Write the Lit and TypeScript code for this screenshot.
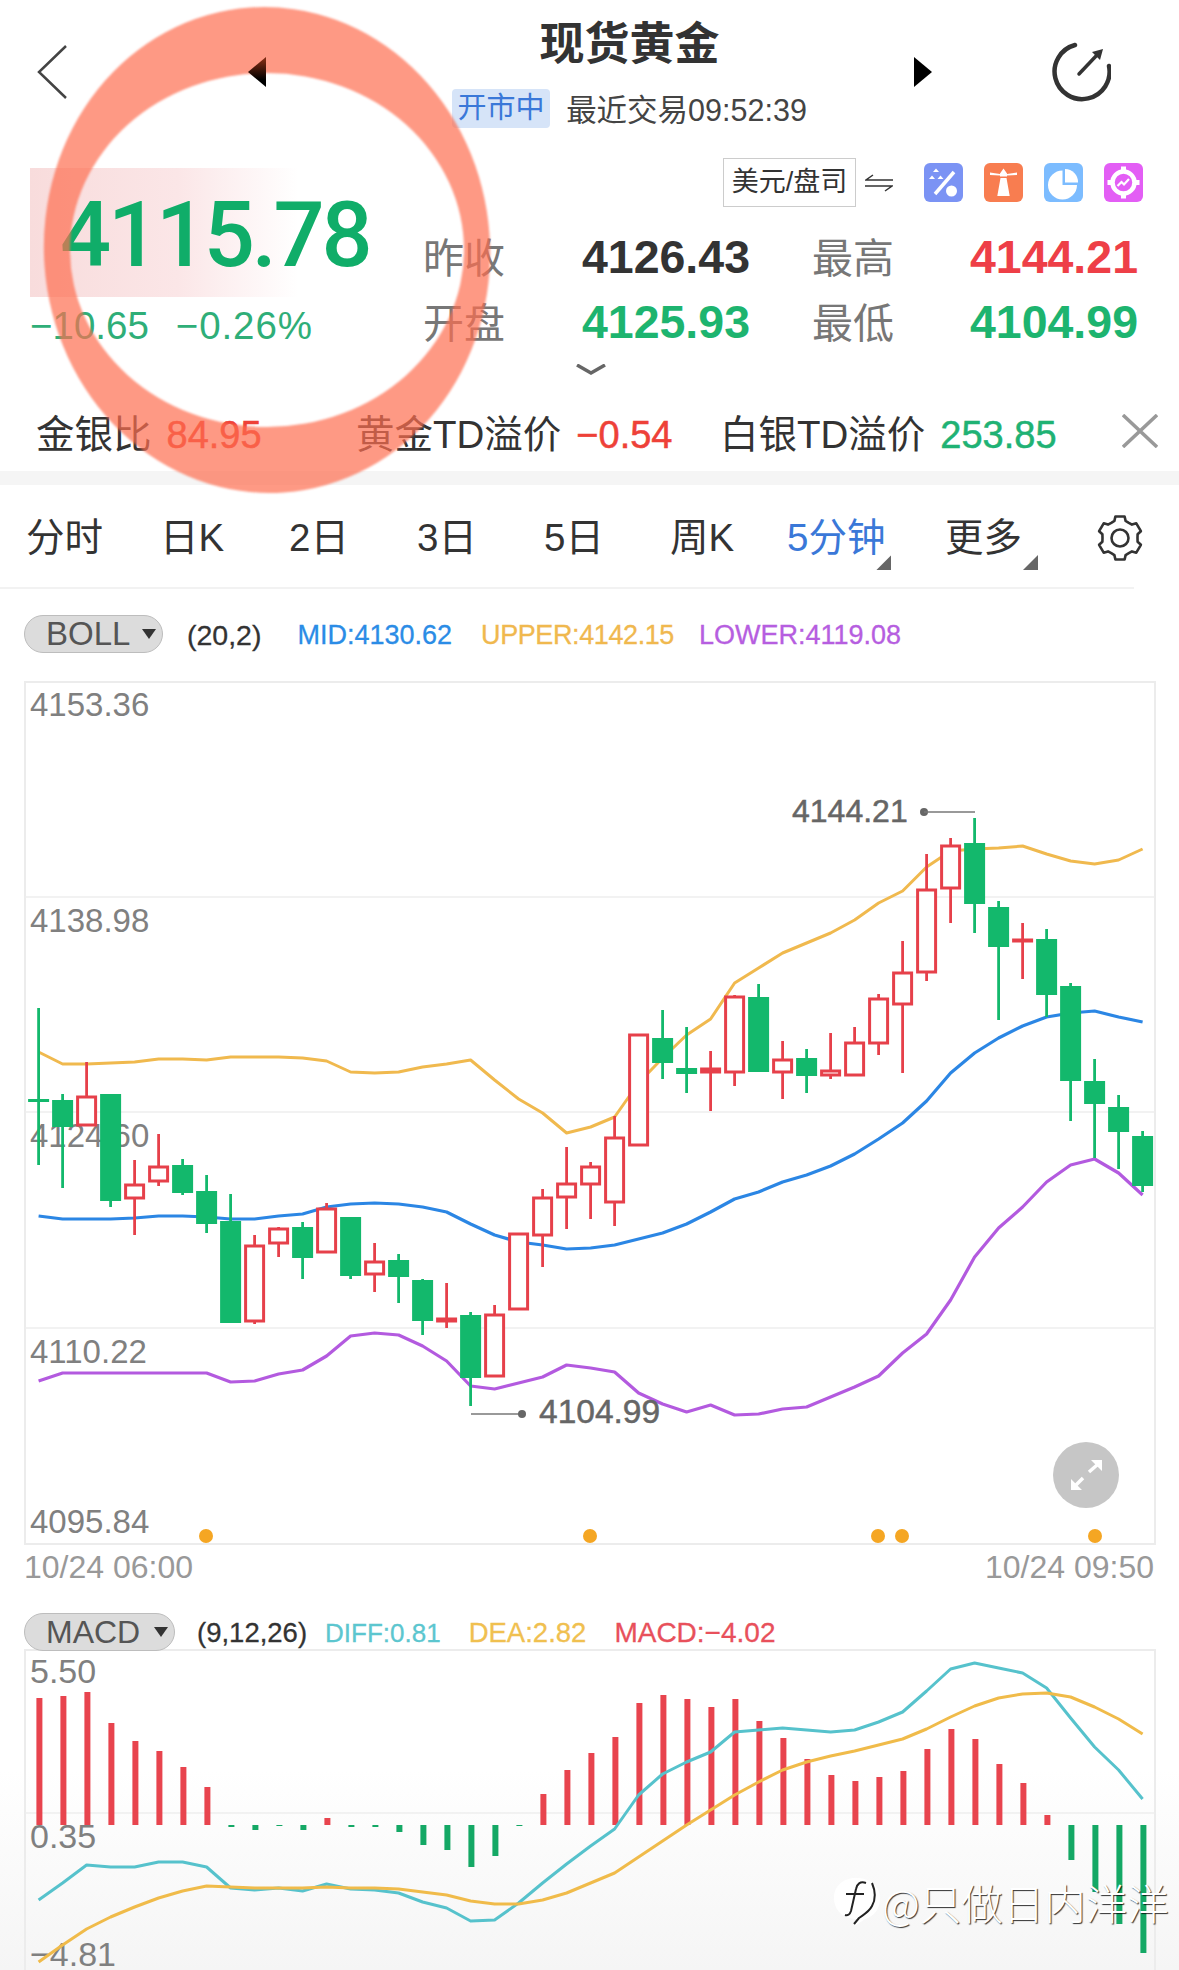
import { LitElement, html, svg, css } from 'lit'
import { customElement } from 'lit/decorators.js'

// wickTop, bodyTop, bodyBottom, wickBottom, 1 = rising (hollow red)
const CANDLES: number[][] = [
  [1008, 1099, 1102, 1165, 0], [1094, 1100, 1127, 1188, 0], [1062, 1096, 1126, 1126, 1], [1094, 1094, 1201, 1207, 0],
  [1160, 1184, 1199, 1235, 1], [1134, 1166, 1182, 1186, 1], [1159, 1165, 1193, 1195, 0], [1175, 1191, 1224, 1233, 0],
  [1194, 1221, 1323, 1323, 0], [1235, 1245, 1322, 1324, 1], [1227, 1228, 1244, 1257, 1], [1222, 1227, 1258, 1279, 0],
  [1203, 1208, 1253, 1253, 1], [1217, 1217, 1276, 1279, 0], [1243, 1261, 1275, 1292, 1], [1254, 1260, 1277, 1303, 0],
  [1279, 1280, 1321, 1335, 0], [1283, 1318, 1322, 1328, 1], [1312, 1315, 1378, 1406, 0], [1305, 1314, 1377, 1377, 1],
  [1233, 1233, 1310, 1310, 1], [1189, 1197, 1236, 1267, 1], [1147, 1183, 1198, 1229, 1], [1162, 1166, 1185, 1219, 1],
  [1116, 1137, 1203, 1226, 1], [1034, 1034, 1146, 1146, 1], [1010, 1038, 1063, 1079, 0], [1027, 1068, 1074, 1093, 0],
  [1051, 1068, 1073, 1111, 1], [995, 996, 1073, 1086, 1], [984, 997, 1072, 1072, 0], [1041, 1059, 1073, 1099, 1],
  [1049, 1058, 1076, 1093, 0], [1033, 1070, 1076, 1079, 1], [1027, 1042, 1076, 1076, 1], [994, 998, 1044, 1055, 1],
  [941, 972, 1005, 1073, 1], [854, 889, 973, 981, 1], [838, 845, 889, 923, 1], [818, 843, 904, 933, 0],
  [901, 907, 947, 1020, 0], [923, 939, 942, 979, 1], [929, 939, 995, 1017, 0], [983, 986, 1081, 1121, 0],
  [1059, 1081, 1104, 1158, 0], [1095, 1107, 1132, 1169, 0], [1131, 1136, 1186, 1192, 0],
]

const UPPER = [1052, 1064, 1064, 1063, 1062, 1059, 1059, 1060, 1057, 1057, 1057, 1058, 1061, 1072, 1073, 1072, 1067, 1064, 1060, 1080, 1099, 1113, 1133, 1127, 1117, 1083, 1058, 1035, 1019, 983, 968, 953, 943, 933, 920, 903, 891, 867, 851, 849, 848, 846, 854, 861, 864, 860, 849]
const MID = [1216, 1219, 1219, 1219, 1218, 1216, 1216, 1217, 1219, 1219, 1216, 1214, 1207, 1204, 1203, 1204, 1207, 1212, 1224, 1235, 1242, 1245, 1249, 1248, 1245, 1239, 1233, 1224, 1212, 1199, 1192, 1182, 1175, 1166, 1154, 1139, 1123, 1101, 1073, 1053, 1038, 1026, 1017, 1013, 1011, 1017, 1022]
const LOWER = [1381, 1373, 1373, 1373, 1373, 1373, 1373, 1373, 1382, 1381, 1374, 1370, 1356, 1336, 1333, 1335, 1346, 1361, 1386, 1389, 1383, 1377, 1365, 1368, 1372, 1393, 1404, 1412, 1405, 1415, 1414, 1409, 1407, 1397, 1387, 1376, 1353, 1334, 1300, 1257, 1228, 1207, 1182, 1165, 1159, 1173, 1195]

// bar end y against the zero line at 1825
const BARS = [1698, 1696, 1692, 1723, 1741, 1751, 1767, 1787, 1827, 1830, 1826, 1830, 1818, 1827, 1827, 1832, 1845, 1850, 1867, 1856, 1826, 1794, 1770, 1753, 1737, 1703, 1695, 1699, 1707, 1699, 1721, 1738, 1759, 1775, 1781, 1777, 1771, 1749, 1729, 1739, 1764, 1783, 1815, 1860, 1892, 1924, 1953]
const DIFF = [1900, 1883, 1865, 1867, 1867, 1862, 1862, 1867, 1888, 1890, 1888, 1891, 1884, 1889, 1890, 1893, 1902, 1908, 1921, 1920, 1903, 1883, 1864, 1846, 1829, 1795, 1774, 1762, 1752, 1732, 1730, 1728, 1730, 1732, 1730, 1722, 1712, 1691, 1669, 1663, 1668, 1673, 1688, 1718, 1747, 1770, 1799]
const DEA = [1962, 1945, 1929, 1917, 1907, 1898, 1891, 1886, 1887, 1888, 1888, 1888, 1887, 1888, 1888, 1889, 1892, 1895, 1901, 1904, 1904, 1900, 1893, 1883, 1873, 1857, 1841, 1825, 1810, 1795, 1782, 1770, 1762, 1756, 1751, 1745, 1739, 1729, 1717, 1706, 1698, 1694, 1693, 1697, 1707, 1719, 1734]

const xAt = (i: number) => 38.6 + 24 * i
const line = (ys: number[]) => ys.map((y, i) => `${xAt(i).toFixed(1)},${y}`).join(' ')

// ellipse as two arcs, so both rims fit in one evenodd path
function ellipse(cx: number, cy: number, rx: number, ry: number, deg: number) {
  const a = (deg * Math.PI) / 180
  const dx = rx * Math.cos(a), dy = rx * Math.sin(a)
  const s = `${(cx + dx).toFixed(1)} ${(cy + dy).toFixed(1)}`
  const e = `${(cx - dx).toFixed(1)} ${(cy - dy).toFixed(1)}`
  return `M${s}A${rx} ${ry} ${deg} 1 0 ${e}A${rx} ${ry} ${deg} 1 0 ${s}Z`
}

function gearPath(cx: number, cy: number) {
  const pt = (r: number, deg: number) => {
    const a = (deg * Math.PI) / 180
    return `${(cx + r * Math.cos(a)).toFixed(1)} ${(cy + r * Math.sin(a)).toFixed(1)}`
  }
  let d = ''
  for (let k = 0; k < 6; k++) {
    const a = k * 60 - 90
    d += `${k ? 'L' : 'M'}${pt(17.5, a - 30)}L${pt(18, a - 18)}L${pt(22, a - 12)}L${pt(22, a + 12)}L${pt(18, a + 18)}`
  }
  return d + 'Z'
}

const TABS = ['分时', '日K', '2日', '3日', '5日', '周K', '5分钟', '更多']

@customElement('app-root')
export class AppRoot extends LitElement {
  static styles = css`
    :host {
      display: block;
      position: relative;
      width: 1179px;
      height: 1970px;
      overflow: hidden;
      background: linear-gradient(#fff 0, #fff 1770px, #f5f5f5 1970px);
      font-family: "Liberation Sans", "Noto Sans CJK SC", sans-serif;
      color: #333;
    }
    svg { display: block; }

    .header { display: grid; grid-template-columns: 452px 355px 1fr; height: 158px; }
    .head-left { display: flex; align-items: flex-start; padding: 45px 0 0 37px; }
    .tri-left { margin: 12px 0 0 181px; position: relative; z-index: 6; }
    .head-mid { display: flex; flex-direction: column; align-items: center; padding-top: 20px; }
    .title { font-size: 45px; line-height: 50px; font-weight: 700; color: #333; white-space: nowrap; }
    .status { display: flex; align-items: center; margin-top: 16px; white-space: nowrap; font-size: 30.5px; color: #444; }
    .badge { width: 98px; height: 39px; line-height: 38px; text-align: center; font-size: 29px; color: #3a78d8; background: #d6e4f8; border-radius: 4px; margin-right: 16px; }
    .head-right { display: flex; align-items: flex-start; padding: 42px 0 0 107px; }
    .tri-right { margin-top: 15px; }
    .share { margin-left: 119px; }

    .quote { display: grid; grid-template-columns: 395px 1fr; padding-left: 30px; padding-right: 36px; }
    .price-box { margin-top: 10px; width: 268px; height: 129px; box-sizing: border-box; padding: 7px 0 0 30px; display: flex; align-items: center; background: linear-gradient(90deg, #f8dcdc, #fbe6e7 55%, #fff); }
    .price { font-family: Roboto, "Liberation Sans", sans-serif; font-weight: 500; font-size: 90px; letter-spacing: -3.2px; line-height: 1; color: #10ad69; white-space: nowrap; }
    .change { display: flex; gap: 27px; margin-top: 7px; font-size: 38.5px; line-height: 44px; color: #2fae78; white-space: nowrap; }
    .change .pct { letter-spacing: .9px; }

    .tools { display: flex; justify-content: flex-end; align-items: center; height: 49px; }
    .currency { width: 133px; height: 49px; box-sizing: border-box; border: 1.5px solid #ccc; font-size: 27px; line-height: 46px; text-align: center; color: #333; white-space: nowrap; }
    .swap { margin-left: 9px; margin-right: 31px; }
    .tiles { display: flex; gap: 21px; }

    .stats { display: grid; grid-template-columns: 80px 247px 144px 244px; grid-auto-rows: 65px; align-items: center; margin: 17px 0 0 -2px; white-space: nowrap; }
    .lab { font-size: 41px; color: #777; margin-top: -4px; }
    .lab.far { text-align: right; }
    .val { font-size: 46.5px; font-weight: 700; text-align: right; }
    .dark { color: #333; }
    .green { color: #1db46f; }
    .red { color: #ee3f47; }
    .more { margin: 10px 0 0 151px; }

    .ticker { display: grid; grid-template-columns: 320px 364px 402px 36px; align-items: center; height: 95px; box-sizing: border-box; padding: 14px 0 0 36px; white-space: nowrap; font-size: 38.5px; color: #333; }
    .tick { display: flex; align-items: baseline; gap: 15px; }
    .tick b { font-weight: 400; font-size: 38px; -webkit-text-stroke: .5px currentColor; }
    .tick .up { color: #ee4138; }
    .tick .down { color: #1fb274; }
    .band { height: 14px; background: #f5f5f5; }

    .tabs { display: grid; grid-template-columns: 134px 129px 128px 127px 126px 117px 158px 152px 46px; align-items: center; height: 104px; box-sizing: border-box; margin-right: 45px; padding: 4px 0 0 26px; border-bottom: 2px solid #f2f2f2; }
    .tab { position: relative; justify-self: start; font-size: 38.5px; line-height: 44px; color: #333; white-space: nowrap; }
    .tab.on { color: #3a78d8; }
    .corner { position: absolute; top: 39px; right: -6px; width: 15px; height: 15px; background: #666; clip-path: polygon(100% 0, 100% 100%, 0 100%); }
    .tab.more-tab .corner { right: -16px; }

    .ind { display: flex; align-items: center; height: 38px; margin-top: 26px; margin-left: 24px; white-space: nowrap; font-size: 27px; -webkit-text-stroke: .3px currentColor; }
    .ind.macd { margin-top: 24px; position: relative; z-index: 1; }
    .ind span:not(.pill) { padding-top: 2px; }
    .pill { display: flex; align-items: center; height: 38px; box-sizing: border-box; padding-left: 21px; background: #dcdcdc; border: 1.5px solid #bdbdbd; border-radius: 19px; font-size: 33px; color: #555; -webkit-text-stroke: 0; }
    .pill i { width: 0; height: 0; margin-left: 12px; border-left: 7.5px solid transparent; border-right: 7.5px solid transparent; border-top: 10px solid #333; }
    .pill.boll { width: 139px; }
    .pill.mac { width: 151px; font-size: 32px; }
    .pill.mac i { margin-left: 14px; }
    .params { color: #333; font-size: 28.5px; margin-left: 24px; }
    .params.nine { font-size: 27.5px; margin-left: 22px; }
    .mid { color: #2b8ce6; margin-left: 36px; }
    .upper { color: #f0b84e; margin-left: 29px; letter-spacing: -.4px; }
    .lower { color: #b65ee0; margin-left: 25px; }
    .diff { color: #5cc6cf; margin-left: 18px; font-size: 26px; }
    .dea { color: #f0c050; margin-left: 28px; font-size: 27.5px; }
    .mval { color: #e8505b; margin-left: 28px; font-size: 28px; }

    .chart { position: relative; margin: 28px 0 0 24px; width: 1132px; height: 864px; }
    .expand { position: absolute; left: 1029px; top: 761px; width: 66px; height: 66px; border-radius: 50%; background: #c6c6c6; }
    .axis { display: flex; justify-content: space-between; padding: 0 25px 0 24px; height: 44px; line-height: 44px; font-size: 32px; color: #999; }
    .macd-chart { margin: -2px 0 0 24px; width: 1132px; height: 321px; }
    text { font-family: "Liberation Sans", "Noto Sans CJK SC", sans-serif; }

    .ring { position: absolute; left: 0; top: 0; z-index: 5; pointer-events: none; filter: blur(.8px); }

    .mark { position: absolute; left: 834px; top: 1877px; z-index: 3; display: flex; align-items: center; font-family: "Noto Sans CJK SC", sans-serif; font-weight: 300; font-size: 41.5px; line-height: 50px; color: #fff; text-shadow: 1px 1px 1px rgba(0, 0, 0, .8); white-space: nowrap; }
  `

  private tiles() {
    return html`<div class="tiles">
      <svg width="39" height="39" viewBox="0 0 39 39"><rect width="39" height="39" rx="6" fill="#7b93f4"/>
        <path d="M12 5.5l3 3.5h-6zM8 12.5l3 3.5H5zM16.5 12.5l3 3.5h-6z" fill="#fff"/>
        <path d="M11 31L30 9" stroke="#fff" stroke-width="3.5"/><circle cx="27.5" cy="28" r="5.5" fill="#fff"/></svg>
      <svg width="39" height="39" viewBox="0 0 39 39"><rect width="39" height="39" rx="6" fill="#f87d50"/>
        <path d="M6 9.5l10 1.5v1.5L6 12zM33 9.5L23 11v1.5L33 12zM16 10.5l3.5-5 3.5 5v3h-7zM16.5 15h6l3.2 18H13.3z" fill="#fff"/></svg>
      <svg width="39" height="39" viewBox="0 0 39 39"><rect width="39" height="39" rx="6" fill="#7cbcff"/>
        <path d="M18.5 7.5V22H33A14.5 14.5 0 1 1 18.5 7.5z" fill="#fff"/><path d="M21 6a13 13 0 0 1 13 13.5H21z" fill="#fff"/></svg>
      <svg width="39" height="39" viewBox="0 0 39 39"><rect width="39" height="39" rx="6" fill="#e35ef5"/>
        <circle cx="19.5" cy="19.5" r="11" fill="none" stroke="#fff" stroke-width="4.5"/>
        <path d="M17 3.5h5v5h-5zM17 30.5h5v5h-5zM3.5 17h5v5h-5zM30.5 17h5v5h-5z" fill="#fff"/>
        <path d="M13.5 23l4-4 2.500 2.500 5-5.500" fill="none" stroke="#fff" stroke-width="2.200"/></svg>
    </div>`
  }

  private mainChart() {
    const grid = [897, 1112, 1328]
    const labels: [string, number][] = [['4153.36', 716], ['4138.98', 932], ['4124.60', 1147], ['4110.22', 1363], ['4095.84', 1533]]
    const dots = [206, 590, 878, 902, 1095]
    return html`<svg width="1132" height="864" viewBox="24 681 1132 864">
      <rect x="25" y="682" width="1130" height="862" fill="none" stroke="#ececec" stroke-width="2"/>
      ${grid.map((y) => svg`<line x1="25" x2="1155" y1=${y} y2=${y} stroke="#eee" stroke-width="1.500"/>`)}
      ${labels.map(([t, y]) => svg`<text x="30" y=${y} font-size="33" fill="#808080">${t}</text>`)}
      <polyline points=${line(UPPER)} fill="none" stroke="#f0b94e" stroke-width="3" stroke-linejoin="round"/>
      <polyline points=${line(MID)} fill="none" stroke="#2b86e4" stroke-width="3.200" stroke-linejoin="round"/>
      <polyline points=${line(LOWER)} fill="none" stroke="#b35adf" stroke-width="3.200" stroke-linejoin="round"/>
      ${CANDLES.map((c, i) => {
        const x = xAt(i)
        const col = c[4] ? '#e6404a' : '#13b86c'
        return svg`
          <line x1=${x} x2=${x} y1=${c[0]} y2=${c[1]} stroke=${col} stroke-width="2.800"/>
          <line x1=${x} x2=${x} y1=${c[2]} y2=${c[3]} stroke=${col} stroke-width="2.800"/>
          ${c[4]
            ? svg`<rect x=${x - 9} y=${c[1] + 1} width="18" height=${Math.max(c[2] - c[1] - 2, 1)} fill="#fff" stroke=${col} stroke-width="3"/>`
            : svg`<rect x=${x - 10.5} y=${c[1]} width="21" height=${c[2] - c[1]} fill=${col}/>`}`
      })}
      <text x="792" y="822" font-size="32" fill="#666" stroke="#666" stroke-width=".5">4144.21</text>
      <circle cx="924" cy="812" r="4" fill="#666"/><line x1="924" x2="975" y1="812" y2="812" stroke="#777" stroke-width="1.500"/>
      <line x1="471" x2="522" y1="1414" y2="1414" stroke="#777" stroke-width="1.500"/><circle cx="522" cy="1414" r="4" fill="#666"/>
      <text x="539" y="1423" font-size="33.5" fill="#666" stroke="#666" stroke-width=".5">4104.99</text>
      ${dots.map((x) => svg`<circle cx=${x} cy="1536" r="7" fill="#f5a623"/>`)}
    </svg>`
  }

  private macdChart() {
    const labels: [string, number][] = [['5.50', 1683], ['0.35', 1848], ['−4.81', 1966]]
    return html`<svg width="1132" height="321" viewBox="24 1649 1132 321">
      <path d="M25 1970V1650H1155V1970" fill="none" stroke="#ececec" stroke-width="2"/>
      <line x1="25" x2="1155" y1="1813" y2="1813" stroke="#eee" stroke-width="1.500"/>
      ${labels.map(([t, y]) => svg`<text x="30" y=${y} font-size="34" fill="#808080">${t}</text>`)}
      ${BARS.map((y, i) => {
        const x = xAt(i) + 0.8
        const up = y < 1825
        return svg`<rect x=${x - 3} y=${Math.min(y, 1825)} width="6" height=${Math.abs(y - 1825)} fill=${up ? '#e8444e' : '#14a865'}/>`
      })}
      <polyline points=${line(DIFF)} fill="none" stroke="#56c2cc" stroke-width="3" stroke-linejoin="round"/>
      <polyline points=${line(DEA)} fill="none" stroke="#f0bb4a" stroke-width="3" stroke-linejoin="round"/>
    </svg>`
  }

  render() {
    const ring = ellipse(267, 250, 223, 243, -4) + ellipse(267, 250, 197, 177, 0)
    return html`
      <div class="header">
        <div class="head-left">
          <svg width="30" height="54" viewBox="0 0 30 54"><path d="M29 1L2 27l27 26" fill="none" stroke="#444" stroke-width="2.500"/></svg>
          <svg class="tri-left" width="18" height="30" viewBox="0 0 18 30">
            <defs><linearGradient id="tri" x1="0" y1="0" x2="0" y2="1"><stop offset=".1" stop-color="#7a2a12"/><stop offset=".75" stop-color="#000"/></linearGradient></defs>
            <path d="M18 0v30L0 15z" fill="url(#tri)"/></svg>
        </div>
        <div class="head-mid">
          <div class="title">现货黄金</div>
          <div class="status"><span class="badge">开市中</span>最近交易09:52:39</div>
        </div>
        <div class="head-right">
          <svg class="tri-right" width="18" height="30" viewBox="0 0 18 30"><path d="M0 0v30l18-15z" fill="#000"/></svg>
          <svg class="share" width="60" height="60" viewBox="0 0 60 60">
            <path d="M24 3A27.500 27.500 0 1 0 58 24" fill="none" stroke="#333" stroke-width="4.500" stroke-linecap="round"/>
            <path d="M28 32L46 13" stroke="#333" stroke-width="3.500" stroke-linecap="round"/>
            <path d="M52 7L41 10l8 8z" fill="#333"/></svg>
        </div>
      </div>

      <div class="quote">
        <div>
          <div class="price-box"><span class="price">4115.78</span></div>
          <div class="change"><span>−10.65</span><span class="pct">−0.26%</span></div>
        </div>
        <div>
          <div class="tools">
            <div class="currency">美元/盘司</div>
            <svg class="swap" width="28" height="18" viewBox="0 0 28 18"><path d="M8 1L1 6h27M0 12h27l-7 5" fill="none" stroke="#333" stroke-width="1.500"/></svg>
            ${this.tiles()}
          </div>
          <div class="stats">
            <span class="lab">昨收</span><span class="val dark">4126.43</span>
            <span class="lab far">最高</span><span class="val red">4144.21</span>
            <span class="lab">开盘</span><span class="val green">4125.93</span>
            <span class="lab far">最低</span><span class="val green">4104.99</span>
          </div>
          <svg class="more" width="30" height="12" viewBox="0 0 30 12"><path d="M1 1l14 8 14-8" fill="none" stroke="#666" stroke-width="3.500"/></svg>
        </div>
      </div>

      <div class="ticker">
        <div class="tick"><span>金银比</span><b class="up">84.95</b></div>
        <div class="tick"><span>黄金TD溢价</span><b class="up">−0.54</b></div>
        <div class="tick"><span>白银TD溢价</span><b class="down">253.85</b></div>
        <svg width="36" height="34" viewBox="0 0 36 34"><path d="M1 1l34 32M35 1L1 33" stroke="#999" stroke-width="3.500"/></svg>
      </div>
      <div class="band"></div>

      <div class="tabs">
        ${TABS.map((t) => html`<div class="tab ${t === '5分钟' ? 'on' : ''} ${t === '更多' ? 'more-tab' : ''}">${t}${t === '5分钟' || t === '更多' ? html`<span class="corner"></span>` : ''}</div>`)}
        <svg width="46" height="46" viewBox="0 0 46 46"><path d=${gearPath(23, 23)} fill="none" stroke="#333" stroke-width="2.600" stroke-linejoin="round"/><circle cx="23" cy="23" r="8.500" fill="none" stroke="#333" stroke-width="2.600"/></svg>
      </div>

      <div class="ind">
        <span class="pill boll">BOLL<i></i></span>
        <span class="params">(20,2)</span>
        <span class="mid">MID:4130.62</span>
        <span class="upper">UPPER:4142.15</span>
        <span class="lower">LOWER:4119.08</span>
      </div>

      <div class="chart">
        ${this.mainChart()}
        <div class="expand"><svg width="66" height="66" viewBox="0 0 66 66"><path d="M36 30l8-7M30 36l-7 7" stroke="#fff" stroke-width="3.500"/><path d="M49 18v11L38 18zM18 48V37l11 11z" fill="#fff"/></svg></div>
      </div>
      <div class="axis"><span>10/24 06:00</span><span>10/24 09:50</span></div>

      <div class="ind macd">
        <span class="pill mac">MACD<i></i></span>
        <span class="params nine">(9,12,26)</span>
        <span class="diff">DIFF:0.81</span>
        <span class="dea">DEA:2.82</span>
        <span class="mval">MACD:−4.02</span>
      </div>
      <div class="macd-chart">${this.macdChart()}</div>

      <div class="mark">
        <svg width="48" height="50" viewBox="0 0 48 50"><path d="M22 1c14 0 24 8 24 20 0 10-5 18-15 21l-10 7 2-7C9 42 0 33 0 21 0 9 9 1 22 1z" fill="#fff"/>
          <path d="M32 6c-6-2-9 1-10 6l-5 22c-1 3-3 5-6 4M12 17h18M38 6c3 7 4 16 0 23-3 6-9 9-13 12l-5 6" fill="none" stroke="#222" stroke-width="2"/></svg>
        <span>@只做日内洋洋</span>
      </div>

      <svg class="ring" width="1179" height="520" viewBox="0 0 1179 520"><path d=${ring} fill="rgb(254,110,80)" fill-opacity=".7" fill-rule="evenodd"/></svg>
    `
  }
}

declare global {
  interface HTMLElementTagNameMap {
    'app-root': AppRoot
  }
}
